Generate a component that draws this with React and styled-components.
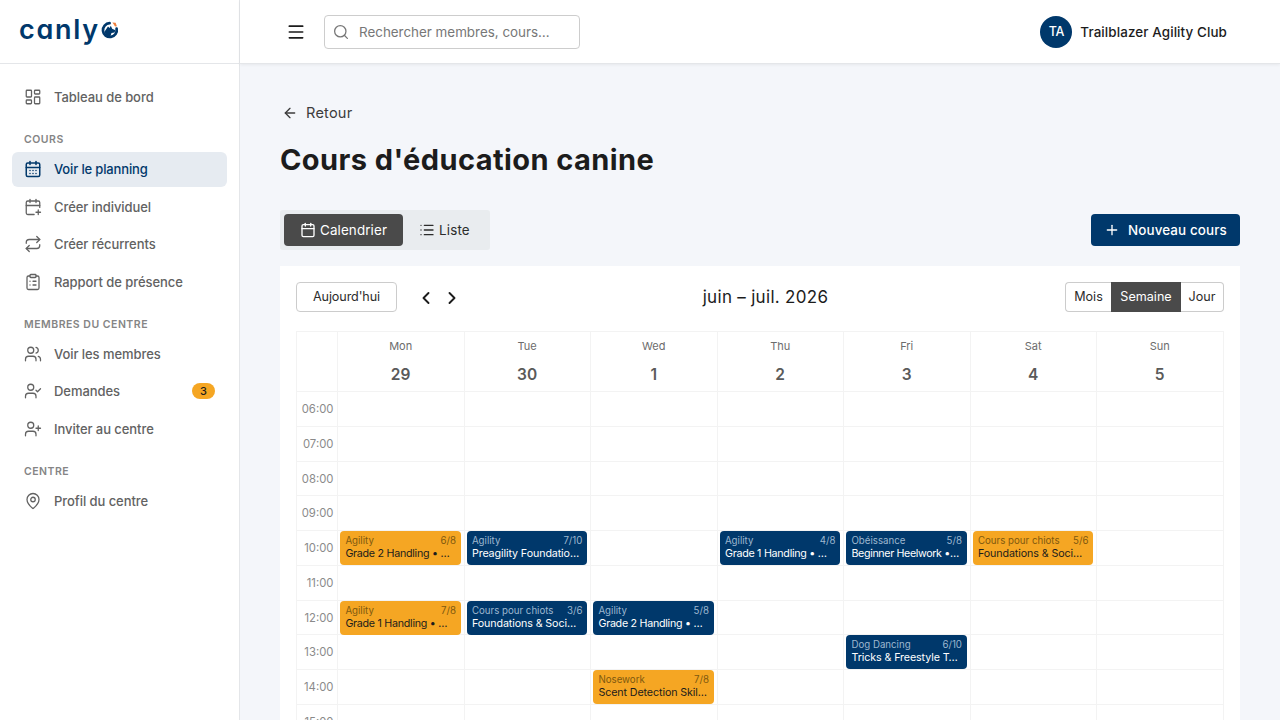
import styled, { createGlobalStyle } from "styled-components";
import {
  ArrowLeft,
  Calendar,
  CalendarDays,
  CalendarPlus,
  ChevronLeft,
  ChevronRight,
  ClipboardList,
  LayoutDashboard,
  List,
  MapPin,
  Menu,
  Plus,
  Repeat,
  Search,
  UserCheck,
  UserPlus,
  Users,
} from "lucide-react";

const navy = "#00386b";
const orange = "#f5a623";
const dark = "#4a4a4a";

const GlobalStyle = createGlobalStyle`
  * {
    box-sizing: border-box;
  }

  body {
    margin: 0;
    overflow: hidden;
    background: #f4f6fa;
    color: #1c1c1c;
    font-family: Inter, "Open Sans", sans-serif;
  }

  button {
    margin: 0;
    font-family: inherit;
    cursor: pointer;
  }
`;

// Page shell
const Layout = styled.div`
  display: flex;
  height: 100vh;
  overflow: hidden;
`;

const Sidebar = styled.aside`
  width: 240px;
  flex-shrink: 0;
  background: #fff;
  border-right: 1px solid #e4e6e9;
`;

const Brand = styled.div`
  display: flex;
  align-items: center;
  height: 64px;
  padding: 0 0 3px 19px;
  border-bottom: 1px solid #e4e6e9;
`;

const BrandName = styled.span`
  color: ${navy};
  font-size: 27px;
  font-weight: 600;
  line-height: 32px;
  letter-spacing: 1.7px;
  font-feature-settings: "cv11";
`;

// Sidebar navigation
const Nav = styled.nav`
  padding: 15.6px 12px;
`;

const NavLabel = styled.div`
  padding: 17px 12px 4.5px;
  color: #858585;
  font-size: 10.5px;
  font-weight: 600;
  line-height: 15px;
  letter-spacing: 0.5px;
`;

const NavItem = styled.a`
  display: flex;
  align-items: center;
  gap: 12px;
  height: 35.5px;
  margin-bottom: 2px;
  padding: 0 12px;
  border-radius: 6px;
  background: ${(p) => (p.$active ? "#e6ebf1" : "transparent")};
  color: ${(p) => (p.$active ? navy : "#626262")};
  font-size: 13px;
  font-weight: ${(p) => (p.$active ? 500 : 450)};
  line-height: 16px;
  letter-spacing: ${(p) => (p.$active ? "-0.15px" : "-0.06px")};
  white-space: nowrap;

  &:last-child {
    margin-bottom: 0;
  }
`;

const Badge = styled.span`
  width: 23px;
  height: 16px;
  margin-left: auto;
  border-radius: 8px;
  background: ${orange};
  color: #1c1c1c;
  font-size: 11px;
  font-weight: 500;
  line-height: 16px;
  text-align: center;
`;

// Top bar
const Main = styled.div`
  display: flex;
  flex: 1;
  flex-direction: column;
  min-width: 0;
`;

const TopBar = styled.header`
  display: flex;
  align-items: center;
  flex-shrink: 0;
  height: 64px;
  padding: 0 53px 0 46px;
  background: #fff;
  border-bottom: 1px solid #e4e6e9;
  box-shadow: 0 1px 3px rgba(0, 0, 0, 0.06);
`;

const SearchBox = styled.div`
  display: flex;
  align-items: center;
  gap: 9px;
  width: 256px;
  height: 34px;
  margin-left: 18px;
  padding-left: 7px;
  border: 1px solid #cdcdcd;
  border-radius: 4px;
  color: #777;
  font-size: 13.4px;

  svg {
    padding: 0.5px;
  }
`;

const Account = styled.div`
  display: flex;
  align-items: center;
  gap: 8px;
  margin-left: auto;
  font-size: 13.4px;
  font-weight: 500;
  letter-spacing: 0.11px;
`;

const Avatar = styled.span`
  width: 32px;
  height: 32px;
  border-radius: 50%;
  background: ${navy};
  color: #fff;
  font-size: 12.5px;
  letter-spacing: -0.3px;
  line-height: 32px;
  text-align: center;
`;

// Page content
const Content = styled.main`
  padding: 36px 40px 0;
`;

const BackLink = styled.a`
  display: flex;
  align-items: center;
  gap: 8px;
  height: 26px;
  padding-left: 2px;
  color: #3c3c3c;
  font-size: 14.6px;
  letter-spacing: 0.2px;
`;

const Title = styled.h1`
  margin: 15px 0 31px;
  font-size: 29px;
  font-weight: 700;
  line-height: 38px;
  letter-spacing: 0.42px;
`;

const Actions = styled.div`
  display: flex;
  align-items: center;
  justify-content: space-between;
  height: 40px;
`;

const Toggle = styled.div`
  display: flex;
  width: 210px;
  height: 40px;
  padding: 4px;
  border-radius: 3px;
  background: #e9ecef;
`;

const ToggleButton = styled.button`
  display: flex;
  align-items: center;
  gap: 4px;
  height: 32px;
  padding: 0 16px;
  border: none;
  border-radius: 4px;
  background: ${(p) => (p.$active ? dark : "transparent")};
  color: ${(p) => (p.$active ? "#fff" : "#2c2c2c")};
  font-size: 13.4px;
  letter-spacing: 0.13px;
`;

const PrimaryButton = styled.button`
  display: flex;
  align-items: center;
  gap: 8px;
  width: 149px;
  height: 32px;
  padding: 0 0 0 13px;
  border: none;
  border-radius: 4px;
  background: ${navy};
  color: #fff;
  font-size: 13.4px;
  font-weight: 500;
  letter-spacing: 0.12px;
  white-space: nowrap;
`;

// Calendar
const Card = styled.section`
  margin-top: 16px;
  padding: 16px;
  background: #fff;
`;

const CalendarBar = styled.div`
  display: grid;
  grid-template-columns: 1fr auto 1fr;
  align-items: center;
  height: 30px;
`;

const BarLeft = styled.div`
  display: flex;
  align-items: center;
`;

const TodayButton = styled.button`
  width: 101px;
  height: 30px;
  margin-right: 19px;
  padding: 0 0 1px;
  border: 1px solid #ccc;
  border-radius: 4px;
  background: #fff;
  color: #2c2c2c;
  font-size: 12.6px;
  letter-spacing: -0.1px;
`;

const ArrowButton = styled.button`
  display: flex;
  align-items: center;
  width: 20px;
  height: 30px;
  margin-right: 6px;
  padding: 2px 0 0;
  border: none;
  background: none;
  color: #1c1c1c;
`;

const Period = styled.h2`
  margin: 0;
  padding-left: 11px;
  font-size: 17px;
  font-weight: 400;
  letter-spacing: 0.3px;
  white-space: nowrap;
`;

const ViewGroup = styled.div`
  display: flex;
  justify-self: end;
`;

const ViewButton = styled.button`
  width: ${(p) => p.$width}px;
  height: 30px;
  padding: 0 0 1px;
  border: 1px solid ${(p) => (p.$active ? dark : "#ccc")};
  background: ${(p) => (p.$active ? dark : "#fff")};
  color: ${(p) => (p.$active ? "#fff" : "#2c2c2c")};
  font-size: 12.6px;

  &:first-child {
    border-right: none;
    border-radius: 4px 0 0 4px;
  }

  &:last-child {
    border-left: none;
    border-radius: 0 4px 4px 0;
  }
`;

const Week = styled.div`
  margin-top: 19px;
  border: 1px solid #f3f3f3;
`;

const WeekRow = styled.div`
  display: grid;
  grid-template-columns: 40.4px repeat(7, 1fr);
  height: ${(p) => p.$height}px;
  border-bottom: 1px solid #f3f3f3;
`;

const Cell = styled.div`
  min-width: 0;
  padding: 0 3px 0 2px;
  border-left: 1px solid #f3f3f3;
`;

const HourLabel = styled.div`
  padding-right: 4px;
  color: #8a8a8a;
  font-size: 11.3px;
  line-height: 34px;
  text-align: right;
`;

const DayHead = styled(Cell)`
  display: flex;
  flex-direction: column;
  align-items: center;
  padding-top: 6px;
  color: #6c6c6c;
  font-size: 11px;
  line-height: 17px;

  strong {
    margin-top: 9px;
    color: #5a5a5a;
    font-size: 15.5px;
    font-weight: 600;
    line-height: 22px;
  }
`;

const EventCard = styled.div`
  height: 34px;
  padding: 4px 5px 0;
  overflow: hidden;
  border-radius: 4px;
  background: ${(p) => (p.$full ? orange : navy)};
  color: ${(p) => (p.$full ? "#1c1c1c" : "#fff")};
  white-space: nowrap;
`;

const EventMeta = styled.div`
  display: flex;
  justify-content: space-between;
  color: ${(p) => (p.$full ? "#80590f" : "#9db7cf")};
  font-size: 9.7px;
  line-height: 12px;
`;

const EventName = styled.div`
  font-size: 10.7px;
  line-height: 13px;
  letter-spacing: ${(p) => p.$spacing ?? -0.1}px;
`;

const sections = [
  { items: [{ icon: LayoutDashboard, text: "Tableau de bord" }] },
  {
    label: "COURS",
    items: [
      { icon: CalendarDays, text: "Voir le planning", active: true },
      { icon: CalendarPlus, text: "Créer individuel" },
      { icon: Repeat, text: "Créer récurrents" },
      { icon: ClipboardList, text: "Rapport de présence" },
    ],
  },
  {
    label: "MEMBRES DU CENTRE",
    items: [
      { icon: Users, text: "Voir les membres" },
      { icon: UserCheck, text: "Demandes", badge: 3 },
      { icon: UserPlus, text: "Inviter au centre" },
    ],
  },
  { label: "CENTRE", items: [{ icon: MapPin, text: "Profil du centre" }] },
];

const days = [
  ["Mon", 29],
  ["Tue", 30],
  ["Wed", 1],
  ["Thu", 2],
  ["Fri", 3],
  ["Sat", 4],
  ["Sun", 5],
];

const hours = ["06", "07", "08", "09", "10", "11", "12", "13", "14", "15"];

// Keys are "hour-day index"; `full` marks the almost full courses
const events = {
  "10-0": { type: "Agility", seats: "6/8", name: "Grade 2 Handling • …", spacing: -0.27, full: true },
  "10-1": { type: "Agility", seats: "7/10", name: "Preagility Foundatio…" },
  "10-3": { type: "Agility", seats: "4/8", name: "Grade 1 Handling • …", spacing: -0.27 },
  "10-4": { type: "Obéissance", seats: "5/8", name: "Beginner Heelwork •…", spacing: -0.36 },
  "10-5": { type: "Cours pour chiots", seats: "5/6", name: "Foundations & Soci…", full: true },
  "12-0": { type: "Agility", seats: "7/8", name: "Grade 1 Handling • …", spacing: -0.27, full: true },
  "12-1": { type: "Cours pour chiots", seats: "3/6", name: "Foundations & Soci…" },
  "12-2": { type: "Agility", seats: "5/8", name: "Grade 2 Handling • …", spacing: -0.27 },
  "13-4": { type: "Dog Dancing", seats: "6/10", name: "Tricks & Freestyle T…" },
  "14-2": { type: "Nosework", seats: "7/8", name: "Scent Detection Skil…", full: true },
};

// Round mark that closes the wordmark: a ring with a dog's head inside
const BrandMark = () => (
  <svg width="20" height="20" viewBox="0 0 20 20" fill="none">
    <path
      d="M9.6 3.2A6.9 6.9 0 1 0 16.6 8.6"
      stroke={navy}
      strokeWidth="2.7"
      strokeLinecap="round"
    />
    <path d="M12.4 2.6l3.2.2 1.3 3.4-1.9.2-1.2-2z" fill="#ef7f3b" />
    <path d="M4.6 11.5L8 6.4l1.6 1.5 1.2-2.2 1.4 3 3.2 1.5-.9 2.2-3 .6-1.2 3.8-4.5-.6z" fill={navy} />
  </svg>
);

const SideNav = () => (
  <Nav>
    {sections.map((section, i) => (
      <div key={i}>
        {section.label && <NavLabel>{section.label}</NavLabel>}
        {section.items.map(({ icon: Icon, text, active, badge }) => (
          <NavItem key={text} $active={active}>
            <Icon size={18} strokeWidth={active ? 2 : 1.7} />
            {text}
            {badge && <Badge>{badge}</Badge>}
          </NavItem>
        ))}
      </div>
    ))}
  </Nav>
);

const CourseEvent = ({ event }) => (
  <EventCard $full={event.full}>
    <EventMeta $full={event.full}>
      <span>{event.type}</span>
      <span>{event.seats}</span>
    </EventMeta>
    <EventName $spacing={event.spacing}>{event.name}</EventName>
  </EventCard>
);

const WeekView = () => (
  <Week>
    <WeekRow $height={60.4}>
      <div />
      {days.map(([name, date]) => (
        <DayHead key={name}>
          {name}
          <strong>{date}</strong>
        </DayHead>
      ))}
    </WeekRow>
    {hours.map((hour) => (
      <WeekRow key={hour} $height={34.7}>
        <HourLabel>{hour}:00</HourLabel>
        {days.map(([name], day) => {
          const event = events[`${hour}-${day}`];
          return <Cell key={name}>{event && <CourseEvent event={event} />}</Cell>;
        })}
      </WeekRow>
    ))}
  </Week>
);

const App = () => {
  return (
    <Layout>
      <GlobalStyle />
      <Sidebar>
        <Brand>
          <BrandName>canly</BrandName>
          <BrandMark />
        </Brand>
        <SideNav />
      </Sidebar>

      <Main>
        <TopBar>
          <Menu size={20} />
          <SearchBox>
            <Search size={18} strokeWidth={1.8} />
            Rechercher membres, cours…
          </SearchBox>
          <Account>
            <Avatar>TA</Avatar>
            Trailblazer Agility Club
          </Account>
        </TopBar>

        <Content>
          <BackLink>
            <ArrowLeft size={16} />
            Retour
          </BackLink>
          <Title>Cours d'éducation canine</Title>

          <Actions>
            <Toggle>
              <ToggleButton $active>
                <Calendar size={16} />
                Calendrier
              </ToggleButton>
              <ToggleButton>
                <List size={16} />
                Liste
              </ToggleButton>
            </Toggle>
            <PrimaryButton>
              <Plus size={16} />
              Nouveau cours
            </PrimaryButton>
          </Actions>

          <Card>
            <CalendarBar>
              <BarLeft>
                <TodayButton>Aujourd'hui</TodayButton>
                <ArrowButton>
                  <ChevronLeft size={20} strokeWidth={2.3} />
                </ArrowButton>
                <ArrowButton>
                  <ChevronRight size={20} strokeWidth={2.3} />
                </ArrowButton>
              </BarLeft>
              <Period>juin – juil. 2026</Period>
              <ViewGroup>
                <ViewButton $width={46}>Mois</ViewButton>
                <ViewButton $width={70} $active>
                  Semaine
                </ViewButton>
                <ViewButton $width={43}>Jour</ViewButton>
              </ViewGroup>
            </CalendarBar>
            <WeekView />
          </Card>
        </Content>
      </Main>
    </Layout>
  );
};

export default App;
